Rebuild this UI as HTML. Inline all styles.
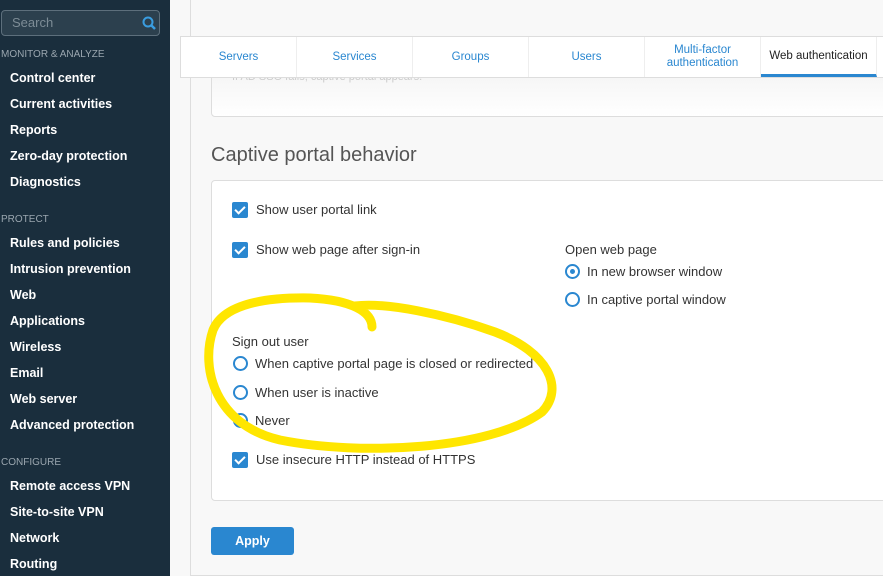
<!DOCTYPE html>
<html><head><meta charset="utf-8"><style>
*{margin:0;padding:0;box-sizing:border-box}
body{width:883px;height:576px;overflow:hidden;background:#f8f8f8;font-family:"Liberation Sans",sans-serif;position:relative;color:#333}
.sb{position:absolute;left:0;top:0;width:170px;height:576px;background:#1a2e3d}
.search{position:absolute;left:1px;top:10px;width:159px;height:26px;border:1px solid #5d6f7c;border-radius:4px;background:#2c404e;color:#7d8c96;font-size:13px;padding:4px 10px}
.sec{position:absolute;left:1px;font-size:10px;color:#9aa6af}
.it{position:absolute;left:10px;font-size:12.5px;font-weight:bold;color:#fff}
.panel{position:absolute;left:190px;top:0;width:700px;height:576px;border-left:1px solid #ddd;border-bottom:1px solid #ddd;background:#f8f8f8}
.card{position:absolute;background:#fff;border:1px solid #ddd;border-radius:4px}
.tabs{position:absolute;left:180px;top:36px;width:710px;height:42px;background:#fff;border:1px solid #ddd;display:flex}
.tab{width:116px;border-right:1px solid #eee;color:#2a87d0;font-size:11.5px;text-align:center;display:flex;align-items:center;justify-content:center;line-height:13px}
.tab.act{color:#222;border-bottom:3px solid #2a87d0;padding-top:2px}
.t{position:absolute;font-size:13px;color:#333}
.cb{position:absolute;width:16px;height:16px;background:#2a87d0;border-radius:2px}
.cb:after{content:"";position:absolute;left:5px;top:2px;width:4px;height:8px;border:solid #fff;border-width:0 2px 2px 0;transform:rotate(45deg)}
.rd{position:absolute;width:15px;height:15px;border:2px solid #2a87d0;border-radius:50%;background:#fff}
.rd.on:after{content:"";position:absolute;left:3px;top:3px;width:5px;height:5px;background:#2a87d0;border-radius:50%}
</style></head><body>
<div class="sb">
<div class="search">Search<svg style="position:absolute;right:3px;top:5px" width="14" height="14" viewBox="0 0 14 14"><circle cx="6" cy="6" r="4.5" stroke="#3a9de0" stroke-width="2" fill="none"/><path d="M9 9l4 4" stroke="#3a9de0" stroke-width="2.5"/></svg></div>
<div class="sec" style="top:49px">MONITOR &amp; ANALYZE</div>
<div class="it" style="top:71px">Control center</div>
<div class="it" style="top:97px">Current activities</div>
<div class="it" style="top:123px">Reports</div>
<div class="it" style="top:149px">Zero-day protection</div>
<div class="it" style="top:175px">Diagnostics</div>
<div class="sec" style="top:214px">PROTECT</div>
<div class="it" style="top:236px">Rules and policies</div>
<div class="it" style="top:262px">Intrusion prevention</div>
<div class="it" style="top:288px">Web</div>
<div class="it" style="top:314px">Applications</div>
<div class="it" style="top:340px">Wireless</div>
<div class="it" style="top:366px">Email</div>
<div class="it" style="top:392px">Web server</div>
<div class="it" style="top:418px">Advanced protection</div>
<div class="sec" style="top:457px">CONFIGURE</div>
<div class="it" style="top:479px">Remote access VPN</div>
<div class="it" style="top:505px">Site-to-site VPN</div>
<div class="it" style="top:531px">Network</div>
<div class="it" style="top:557px">Routing</div>
</div>
<div class="panel"></div>
<div class="card" style="left:211px;top:60px;width:690px;height:57px;background:linear-gradient(#f2f2f2,#fff)"><div class="t" style="left:20px;top:10px;color:#ccc;font-size:11px">If AD SSO fails, captive portal appears.</div></div>
<div class="tabs">
<div class="tab">Servers</div><div class="tab">Services</div><div class="tab">Groups</div><div class="tab">Users</div><div class="tab">Multi-factor<br>authentication</div><div class="tab act">Web authentication</div>
</div>
<div class="t" style="left:211px;top:144px;font-size:20px;color:#555">Captive portal behavior</div>
<div class="card" style="left:211px;top:180px;width:690px;height:321px"></div>
<div class="cb" style="left:232px;top:202px"></div><div class="t" style="left:256px;top:202px">Show user portal link</div>
<div class="cb" style="left:232px;top:242px"></div><div class="t" style="left:256px;top:242px">Show web page after sign-in</div>
<div class="t" style="left:565px;top:242px">Open web page</div>
<div class="rd on" style="left:565px;top:264px"></div><div class="t" style="left:587px;top:264px">In new browser window</div>
<div class="rd" style="left:565px;top:292px"></div><div class="t" style="left:587px;top:292px">In captive portal window</div>
<div class="t" style="left:232px;top:334px">Sign out user</div>
<div class="rd" style="left:233px;top:356px"></div><div class="t" style="left:255px;top:356px">When captive portal page is closed or redirected</div>
<div class="rd" style="left:233px;top:385px"></div><div class="t" style="left:255px;top:385px">When user is inactive</div>
<div class="rd on" style="left:233px;top:413px"></div><div class="t" style="left:255px;top:413px">Never</div>
<div class="cb" style="left:232px;top:452px"></div><div class="t" style="left:256px;top:452px">Use insecure HTTP instead of HTTPS</div>
<div style="position:absolute;left:211px;top:527px;width:83px;height:28px;background:#2a87d0;border-radius:3px;color:#fff;font-size:12.5px;font-weight:bold;text-align:center;line-height:28px">Apply</div>
<svg style="position:absolute;left:0;top:0" width="883" height="576"><path d="M372,327 C372,312 352,300 310,298 C255,297 222,308 213,330 C200,368 215,425 280,440 C360,456 490,450 542,412 C565,388 548,352 495,332 C445,314 385,302 355,306" stroke="#ffe600" stroke-width="9" fill="none" stroke-linecap="round"/></svg>
</body></html>
